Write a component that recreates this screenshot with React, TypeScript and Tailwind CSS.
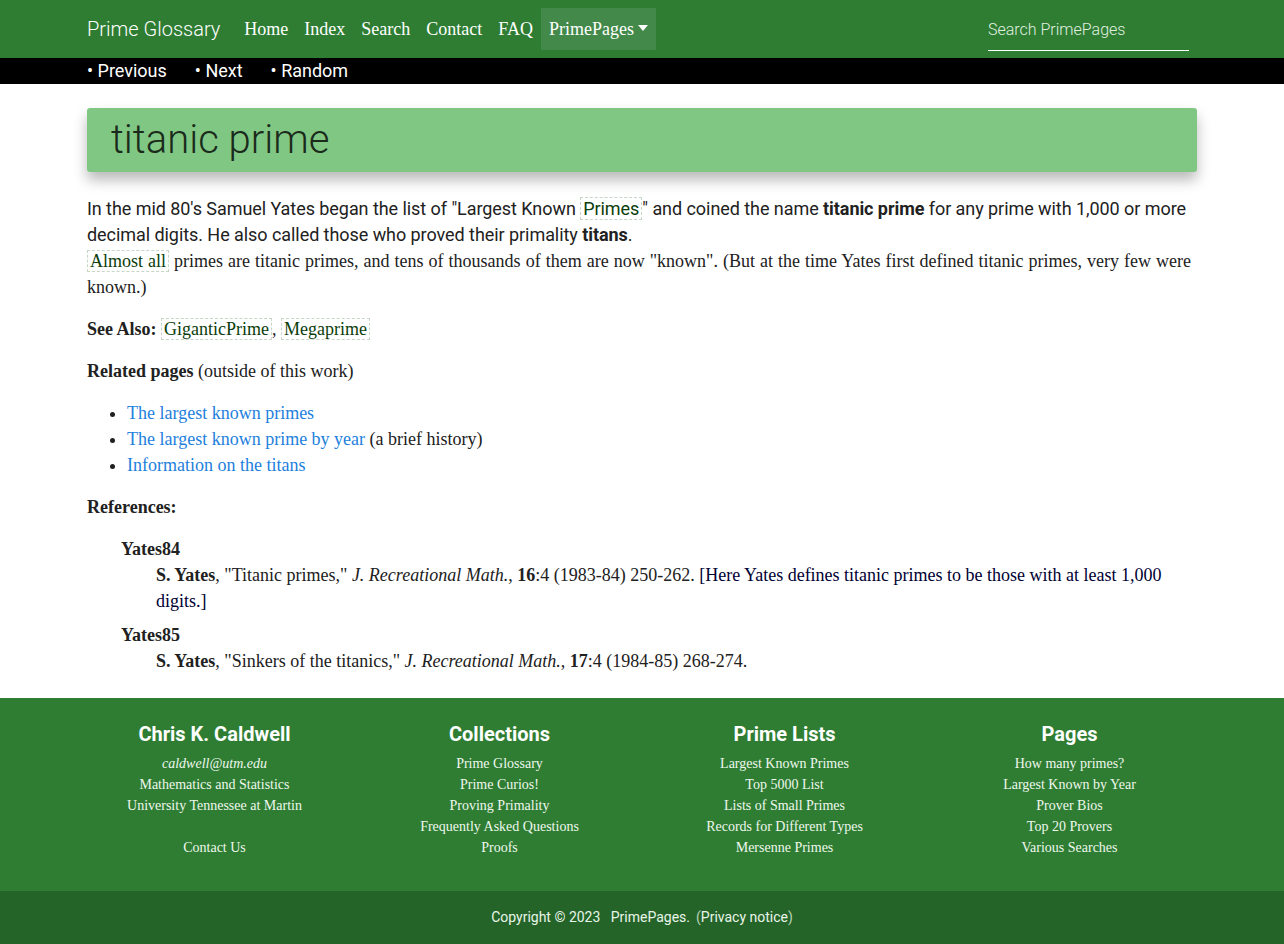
const serif = "font-['Liberation_Serif','Times_New_Roman',serif]";
const roboto = "font-['Roboto','Liberation_Sans',sans-serif]";

function Term({ children }: { children: React.ReactNode }) {
  return (
    <a className="border border-dashed border-[#c8d6c8] px-[2px] text-[#0b3d0b]">{children}</a>
  );
}

function NavBar() {
  const links = ['Home', 'Index', 'Search', 'Contact', 'FAQ'];
  return (
    <nav className="bg-[#2e7d32] h-[58px]">
      <div className="w-[1110px] mx-auto h-full flex items-center">
        <span className={`${roboto} font-light text-[20px] text-white mr-[16px]`}>Prime Glossary</span>
        <ul className={`${serif} flex items-center text-[18px] text-white`}>
          {links.map((l) => (
            <li key={l} className="px-2 leading-[42px]">{l}</li>
          ))}
          <li className="px-2 leading-[42px] bg-[#43894a] flex items-center">
            PrimePages
            <span className="ml-[4px] inline-block w-0 h-0 border-l-[5px] border-r-[5px] border-t-[6px] border-l-transparent border-r-transparent border-t-white mb-[2px]" />
          </li>
        </ul>
        <div className="ml-auto mr-[8px] w-[201px] border-b border-white pb-[8px] pt-[9px]">
          <span className={`${roboto} font-light text-[16px] text-[#e0f0e0]`}>Search PrimePages</span>
        </div>
      </div>
    </nav>
  );
}

function SubNav() {
  return (
    <div className="bg-black h-[26px]">
      <div className={`${roboto} w-[1110px] mx-auto flex gap-7 text-[18px] leading-[26px] text-white`}>
        <span>• Previous</span>
        <span>• Next</span>
        <span>• Random</span>
      </div>
    </div>
  );
}

function Content() {
  return (
    <main className="w-[1110px] mx-auto pt-6 pb-6 text-[#212121]">
      <div className="bg-[#81c784] h-16 rounded-[3px] shadow-[0_8px_14px_rgba(0,0,0,0.28)] flex items-center px-6">
        <h1 className={`${roboto} font-light text-[40px] text-[#1b2b1b]`}>titanic prime</h1>
      </div>

      <p className={`${roboto} mt-6 text-[18px] leading-[26px] tracking-[-0.06px]`}>
        In the mid 80's Samuel Yates began the list of "Largest Known <Term>Primes</Term>" and coined the name{' '}
        <b className="font-bold">titanic prime</b> for any prime with 1,000 or more decimal digits. He also called
        those who proved their primality <b className="font-bold">titans</b>.
      </p>
      <p className={`${serif} pr-[6px] text-[18px] leading-[26px] text-justify`}>
        <Term>Almost all</Term> primes are titanic primes, and tens of thousands of them are now "known". (But at the
        time Yates first defined titanic primes, very few were known.)
      </p>

      <p className={`${serif} mt-4 text-[18px] leading-[26px]`}>
        <b>See Also:</b> <Term>GiganticPrime</Term>, <Term>Megaprime</Term>
      </p>

      <p className={`${serif} mt-4 text-[18px] leading-[26px]`}>
        <b>Related pages</b> (outside of this work)
      </p>
      <ul className={`${serif} mt-4 pl-10 list-disc text-[18px] leading-[26px]`}>
        <li><a className="text-[#1e7fdc]">The largest known primes</a></li>
        <li><a className="text-[#1e7fdc]">The largest known prime by year</a> (a brief history)</li>
        <li><a className="text-[#1e7fdc]">Information on the titans</a></li>
      </ul>

      <p className={`${serif} mt-4 text-[18px] leading-[26px]`}>
        <b>References:</b>
      </p>
      <dl className={`${serif} mt-4 pl-[34px] pr-[6px] text-[18px] leading-[26px]`}>
        <dt className="font-bold">Yates84</dt>
        <dd className="pl-[35px]">
          <b>S. Yates</b>, "Titanic primes," <i>J. Recreational Math.</i>, <b>16</b>:4 (1983-84) 250-262.{' '}
          <span className="text-[#000033]">[Here Yates defines titanic primes to be those with at least 1,000 digits.]</span>
        </dd>
        <dt className="font-bold mt-2">Yates85</dt>
        <dd className="pl-[35px]">
          <b>S. Yates</b>, "Sinkers of the titanics," <i>J. Recreational Math.</i>, <b>17</b>:4 (1984-85) 268-274.
        </dd>
      </dl>
    </main>
  );
}

function FooterCol({ title, items }: { title: string; items: React.ReactNode[] }) {
  return (
    <div className="text-center">
      <h5 className={`${roboto} font-bold text-[20px] leading-[24px] mb-[7px]`}>{title}</h5>
      <ul className={`${serif} text-[14px] leading-[21px] text-[#eef7ee]`}>
        {items.map((it, i) => (
          <li key={i} className="min-h-[21px]">{it}</li>
        ))}
      </ul>
    </div>
  );
}

function Footer() {
  return (
    <footer className="text-white">
      <div className="bg-[#2e7d32] pt-6 pb-[33px]">
        <div className="w-[1140px] mx-auto grid grid-cols-4">
          <FooterCol
            title="Chris K. Caldwell"
            items={[
              <i key="e">caldwell@utm.edu</i>,
              'Mathematics and Statistics',
              'University Tennessee at Martin',
              '',
              'Contact Us',
            ]}
          />
          <FooterCol
            title="Collections"
            items={['Prime Glossary', 'Prime Curios!', 'Proving Primality', 'Frequently Asked Questions', 'Proofs']}
          />
          <FooterCol
            title="Prime Lists"
            items={[
              'Largest Known Primes',
              'Top 5000 List',
              'Lists of Small Primes',
              'Records for Different Types',
              'Mersenne Primes',
            ]}
          />
          <FooterCol
            title="Pages"
            items={['How many primes?', 'Largest Known by Year', 'Prover Bios', 'Top 20 Provers', 'Various Searches']}
          />
        </div>
      </div>
      <div className={`${roboto} bg-[#256428] h-[53px] flex items-center justify-center text-[14px] text-[#e8f5e9]`}>
        <span>Copyright © 2023&nbsp;&nbsp; PrimePages.</span>
        <span className="ml-[6px] text-[#b5d3b6]">(</span>
        <span>Privacy notice</span>
        <span className="text-[#b5d3b6]">)</span>
      </div>
    </footer>
  );
}

export default function App() {
  return (
    <div className="bg-white min-h-screen">
      <NavBar />
      <SubNav />
      <Content />
      <Footer />
    </div>
  );
}
